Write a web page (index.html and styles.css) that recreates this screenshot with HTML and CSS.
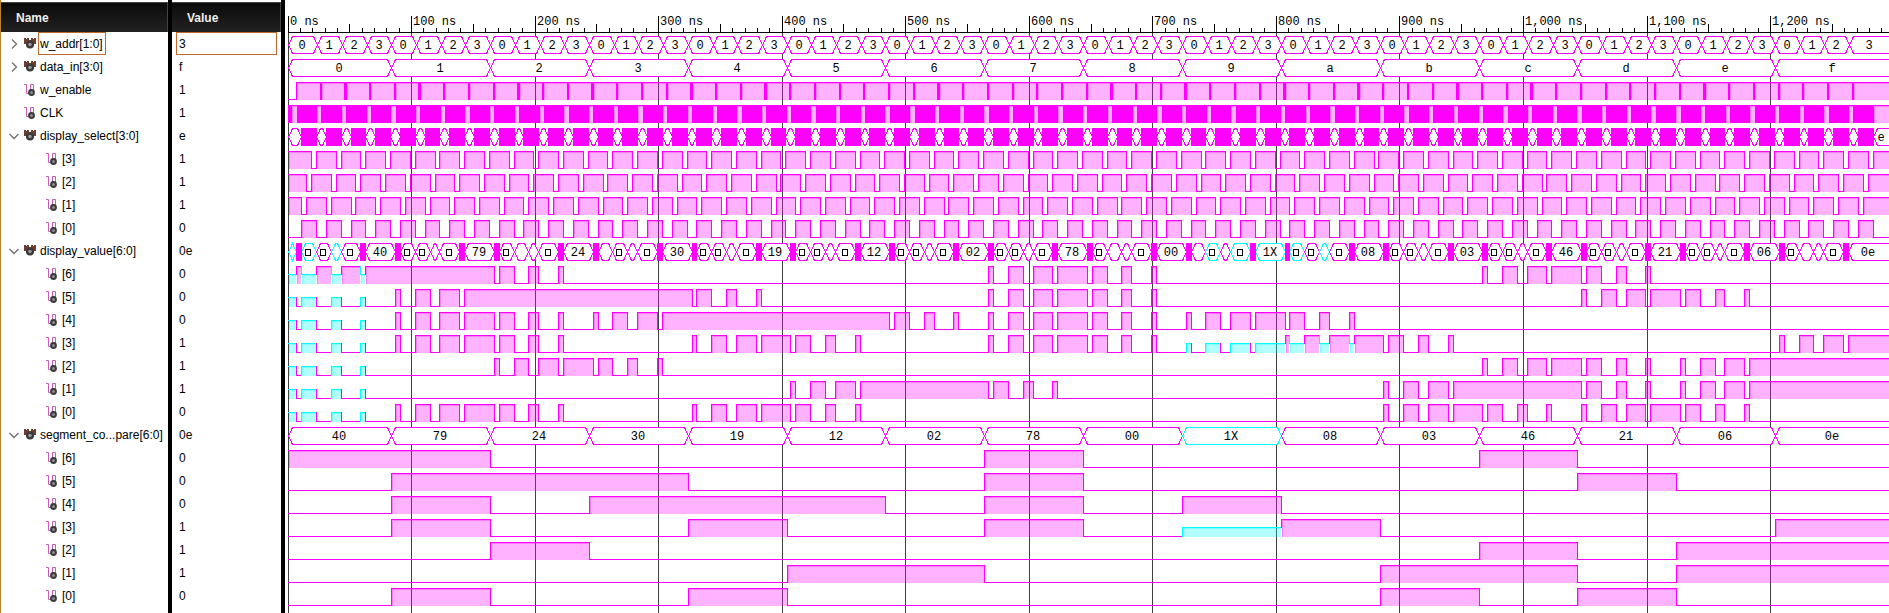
FILE: index.html
```html
<!DOCTYPE html>
<html lang="en">
<head>
<meta charset="utf-8">
<title>Waveform viewer</title>
<link rel="stylesheet" href="styles.css">
</head>
<body>
<svg class="sprites" aria-hidden="true">
  <symbol id="icon-bus" viewBox="0 0 13 12">
    <path d="M0 0H2V1H3V0H5V2H7V0H9V1H10V0H12V6H10V8H2V6H0Z" fill="#6b4030"/>
    <circle cx="6" cy="6.500" r="4" fill="#3a3a3a"/>
    <circle cx="6" cy="6.500" r="1.700" fill="#9a9a9a"/>
  </symbol>
  <symbol id="icon-bit" viewBox="0 0 13 12">
    <path d="M0 0.500H2.500V9.500H6.500V0.500H9.500V8" fill="none" stroke="#c45fb4"/>
    <circle cx="7.500" cy="8.500" r="3.400" fill="#3a3a3a"/>
    <circle cx="7.500" cy="8.500" r="1.500" fill="#8c8c8c"/>
  </symbol>
  <symbol id="icon-chevron" viewBox="0 0 10 10">
    <path d="M3 0.500L7.500 5L3 9.500" fill="none" stroke="#6e6e6e" stroke-width="1.300"/>
  </symbol>
</svg>
<main class="viewer">
  <section class="names">
    <h2 class="head">Name</h2>
    <ul class="list" id="names"></ul>
  </section>
  <section class="values">
    <h2 class="head">Value</h2>
    <ul class="list" id="values"></ul>
  </section>
  <section class="waves">
    <svg class="plot" id="plot" role="img" aria-label="Signal waveforms"></svg>
  </section>
</main>
<script src="waves.js"></script>
</body>
</html>
```
FILE: styles.css
```css
* {
  box-sizing: border-box;
}

body {
  margin: 0;
  background: #fff;
  color: #000;
  font: 12px/23px "Liberation Sans", Arial, sans-serif;
}

.sprites {
  display: none;
}

.viewer {
  display: flex;
  min-height: 100vh;
}

.names {
  flex: 0 0 172px;
  border-left: 1px solid #b8862b;
  border-right: 4px solid #000;
  padding-top: 2px;
}

.values {
  flex: 0 0 113px;
  border-right: 4px solid #000;
  padding-top: 2px;
}

.head {
  height: 30px;
  margin: 0;
  padding-left: 15px;
  border: 1px solid #444;
  border-width: 1px 1px 0 0;
  background: linear-gradient(#0a0a0a, #222);
  color: #eee;
  font-size: 12px;
  line-height: 30px;
}

.list {
  margin: 0;
  padding: 0;
  list-style: none;
}

.row {
  display: flex;
  align-items: center;
  height: 23px;
  white-space: nowrap;
}

.names .row {
  padding-left: 8px;
}

.names .child {
  padding-left: 45px;
}

.toggle {
  display: flex;
  align-items: center;
  justify-content: center;
  width: 10px;
  height: 23px;
  margin-right: 5px;
  padding: 0;
  border: 0;
  background: none;
}

.spacer {
  width: 15px;
}

.chevron {
  width: 10px;
  height: 10px;
}

.open .chevron {
  transform: rotate(90deg);
}

.icon {
  width: 13px;
  height: 12px;
}

.label {
  height: 23px;
  margin-left: 1px;
  padding: 0 2px 0 1px;
  border: 1px solid transparent;
  line-height: 22px;
}

.values .label {
  flex: 1;
  margin: 0 4px;
  padding: 0 2px;
}

.selected .label {
  border-color: #c0692e;
}

.waves {
  flex: 1;
  min-width: 0;
  display: flex;
  overflow: hidden;
}

.plot {
  flex: 1;
  min-width: 0;
  shape-rendering: crispEdges;
  font: 12px "Liberation Mono", "Courier New", monospace;
}

.plot text {
  fill: #000;
}

.centered {
  text-anchor: middle;
}

.grid {
  fill: #404040;
}

.axis {
  fill: #000;
}

.one {
  fill: #f0f;
}

.unknown {
  fill: #0ff;
}

.one-area {
  fill: #f0f;
  fill-opacity: 0.3;
}

.unknown-area {
  fill: #0ff;
  fill-opacity: 0.3;
}

.cell {
  fill: #fff;
  stroke: #f0f;
}

.cell-unknown {
  fill: #fff;
  stroke: #0ff;
}

.truncated {
  fill: none;
  stroke: #000;
}
```
FILE: waves.js
```js
const SCALE = 1.2355;
const ORIGIN = 3;
const ROW = 23;
const HEADER = 32;
const CYCLES = 64;

const CODES = ['40', '79', '24', '30', '19', '12', '02', '78',
               '00', '1X', '08', '03', '46', '21', '06', '0e'];

const bitOf = (code, bit) => {
  if (code === 'XX') return 'X';
  if (code === '1X') return bit === 4 ? 1 : bit === 3 ? 'X' : 0;
  return (parseInt(code, 16) >> bit) & 1;
};

/* Each event is [time in ns, value]. */
const address = [[0, 0]];
for (let i = 1; i < CYCLES; i++) address.push([4 + 20 * i, i % 4]);

const data = CODES.map((_, i) => [i ? 4 + 80 * i : 0, i.toString(16)]);
const segments = CODES.map((code, i) => [i ? 4 + 80 * i : 0, code]);

const display = [[0, 'XX']];
CODES.forEach((code, i) => {
  const old = i ? CODES[i - 1] : 'XX';
  const t = 80 * i + 7;
  display.push([t, code, true], [t + 4, old], [t + 16, code], [t + 28, old],
               [t + 36, code], [t + 52, old, true], [t + 56, code]);
});

const pulses = (start, low, high) => {
  const events = [[0, start]];
  for (let i = 0; i < CYCLES; i++) events.push([low + 20 * i, 0], [high + 20 * i, 1]);
  return events.sort((a, b) => a[0] - b[0]);
};

const zero = [[0, 0], [11, 1]];
for (let i = 1; i < CYCLES; i++) zero.push([3 + 20 * i, 0], [11 + 20 * i, 1]);
zero.push([3 + 20 * CYCLES, 0]);

const enable = [[0, 0], [7, 1]];
for (let i = 1; i < CYCLES; i++) enable.push([6 + 20 * i, 0], [7 + 20 * i, 1]);

const clock = [];
for (let i = 0; i <= CYCLES; i++) clock.push([4 + 20 * i, i < CYCLES ? 7.5 + 20 * i : Infinity]);

const select = [[0, ''], [11, '', true]];
for (let i = 1; i < CYCLES; i++) select.push([3 + 20 * i, ''], [11 + 20 * i, '', true]);
select.push([3 + 20 * CYCLES, 'e']);

const bits = events => bit => events.map(([t, code]) => [t, bitOf(code, bit)]);
const bus = (name, value, open, events) => ({ name, value, open, kind: 'bus', events });
const wire = (name, value, events, child) => ({ name, value, kind: 'wire', events, child });
const children = (values, lookup) => [...values].map((v, i) => {
  const bit = values.length - 1 - i;
  return wire(`[${bit}]`, v, lookup(bit), true);
});
const selectBits = [zero, pulses(1, 11, 15), pulses(1, 15, 19), pulses(1, 19, 23)];

const SIGNALS = [
  bus('w_addr[1:0]', '3', false, address),
  bus('data_in[3:0]', 'f', false, data),
  wire('w_enable', '1', enable),
  { name: 'CLK', value: '1', kind: 'clock', events: clock },
  bus('display_select[3:0]', 'e', true, select),
  ...children('1110', bit => selectBits[bit]),
  bus('display_value[6:0]', '0e', true, display),
  ...children('0001110', bits(display)),
  bus('segment_co...pare[6:0]', '0e', true, segments),
  ...children('0001110', bits(segments)),
];

const use = (cls, id) => `<svg class="${cls}" aria-hidden="true"><use href="#${id}"/></svg>`;

function renderLists() {
  document.getElementById('names').innerHTML = SIGNALS.map((s, i) => {
    const classes = ['row', s.child && 'child', i === 0 && 'selected'].filter(Boolean).join(' ');
    const lead = s.child ? '' : s.kind === 'bus'
      ? `<button class="toggle${s.open ? ' open' : ''}" aria-label="Toggle ${s.name}" aria-expanded="${s.open}">${use('chevron', 'icon-chevron')}</button>`
      : '<span class="spacer"></span>';
    return `<li class="${classes}">${lead}${use('icon', s.kind === 'bus' ? 'icon-bus' : 'icon-bit')}<span class="label">${s.name}</span></li>`;
  }).join('');
  document.getElementById('values').innerHTML = SIGNALS.map((s, i) =>
    `<li class="row${i === 0 ? ' selected' : ''}"><span class="label">${s.value}</span></li>`).join('');
}

const px = t => ORIGIN + Math.floor(t * SCALE);
const rect = (cls, x, y, w, h) => w > 0 && h > 0 ? `<rect class="${cls}" x="${x}" y="${y}" width="${w}" height="${h}"/>` : '';
const text = (x, y, s, cls = '') => `<text class="${cls}" x="${x}" y="${y}">${s}</text>`;

function area(cls, x0, x1, top, bottom) {
  return rect(cls, x0 + 1, top + 1, x1 - x0 - 1, bottom - top)
       + rect(cls, x0 + 1, top + 1, x1 - x0 - 1, 1)
       + rect(cls, x0 + 1, top + 2, 1, bottom - top - 1);
}

function drawWire(events, top, end) {
  const level = { 0: top + 17, 1: top, X: top + 8 };
  const merged = events.filter((e, i) => !i || e[1] !== events[i - 1][1]);
  let areas = '', lines = '';
  merged.forEach(([t, v], i) => {
    const x0 = px(t);
    const next = merged[i + 1];
    const x1 = Math.min(next ? px(next[0]) : end, end);
    if (x0 >= end) return;
    const cls = v === 'X' ? 'unknown' : 'one';
    if (v !== 0) areas += area(cls + '-area', x0, x1, level[v], top + 17);
    lines += rect(cls, x0, level[v], x1 - x0 + 1, 1);
    if (x1 - x0 < 3) lines += rect(cls, x0, top, x1 - x0 + 1, 18);
    if (i) {
      const a = level[merged[i - 1][1]], b = level[v];
      lines += rect(cls, x0, Math.min(a, b), 1, Math.abs(a - b) + 1);
    }
  });
  return areas + lines;
}

function drawClock(highs, top, end) {
  let out = '', x = ORIGIN;
  highs.forEach(([rise, fall]) => {
    const a = px(rise), b = fall === Infinity ? end : px(fall);
    out += rect('one', x, top, a - x, 18) + rect('one', a, top, b - a, 1) + area('one-area', a - 1, b, top, top + 17);
    x = b;
  });
  return out;
}

function drawBus(events, top, end) {
  let cells = '', solids = '';
  events.forEach(([t, v, busy], i) => {
    const last = i === events.length - 1;
    const x0 = px(t), x1 = last ? end : px(events[i + 1][0]);
    if (busy) {
      solids += rect('one', x0, top, x1 - x0 + 1, 18);
      return;
    }
    const l = x0 + 0.5, r = x1 + 0.5, y0 = top + 0.5, y1 = top + 17.5, mid = top + 9;
    const right = last ? `H${r + 8}V${y1}` : `H${r - 4}L${r} ${mid}L${r - 4} ${y1}`;
    const cls = v === 'XX' || v === '1X' ? 'cell-unknown' : 'cell';
    cells += `<path class="${cls}" d="M${l} ${mid}L${l + 4} ${y0}${right}H${l + 4}Z"/>`;
    const label = String(v), width = x1 - x0, cx = Math.floor((x0 + x1) / 2);
    if (!label) return;
    if (width > 22 || label.length === 1) cells += text(cx, top + 13, label, 'centered');
    else if (width >= 15) cells += `<rect class="truncated" x="${cx - 2.5}" y="${top + 6.5}" width="5" height="6"/>`;
  });
  return cells + solids;
}

function drawPlot() {
  const plot = document.getElementById('plot');
  const { width, height } = plot.getBoundingClientRect();
  const end = Math.floor(width);
  let out = '';
  for (let t = 0; px(t) < end; t += 100) {
    out += rect('grid', px(t), HEADER, 1, height - HEADER);
    out += text(px(t) + 2, 25, t.toLocaleString('en-US') + ' ns');
  }
  for (let t = 0; px(t) < end; t += 10) {
    const size = t % 100 === 0 ? 16 : t % 50 === 0 ? 8 : 4;
    out += rect('axis', px(t), HEADER - size, 1, size);
  }
  out += rect('axis', ORIGIN, HEADER, end - ORIGIN, 1);
  const draw = { bus: drawBus, wire: drawWire, clock: drawClock };
  SIGNALS.forEach((s, i) => {
    out += draw[s.kind](s.events, HEADER + 4 + i * ROW, end);
  });
  plot.innerHTML = out;
}

renderLists();
drawPlot();
window.addEventListener('resize', drawPlot);
```
